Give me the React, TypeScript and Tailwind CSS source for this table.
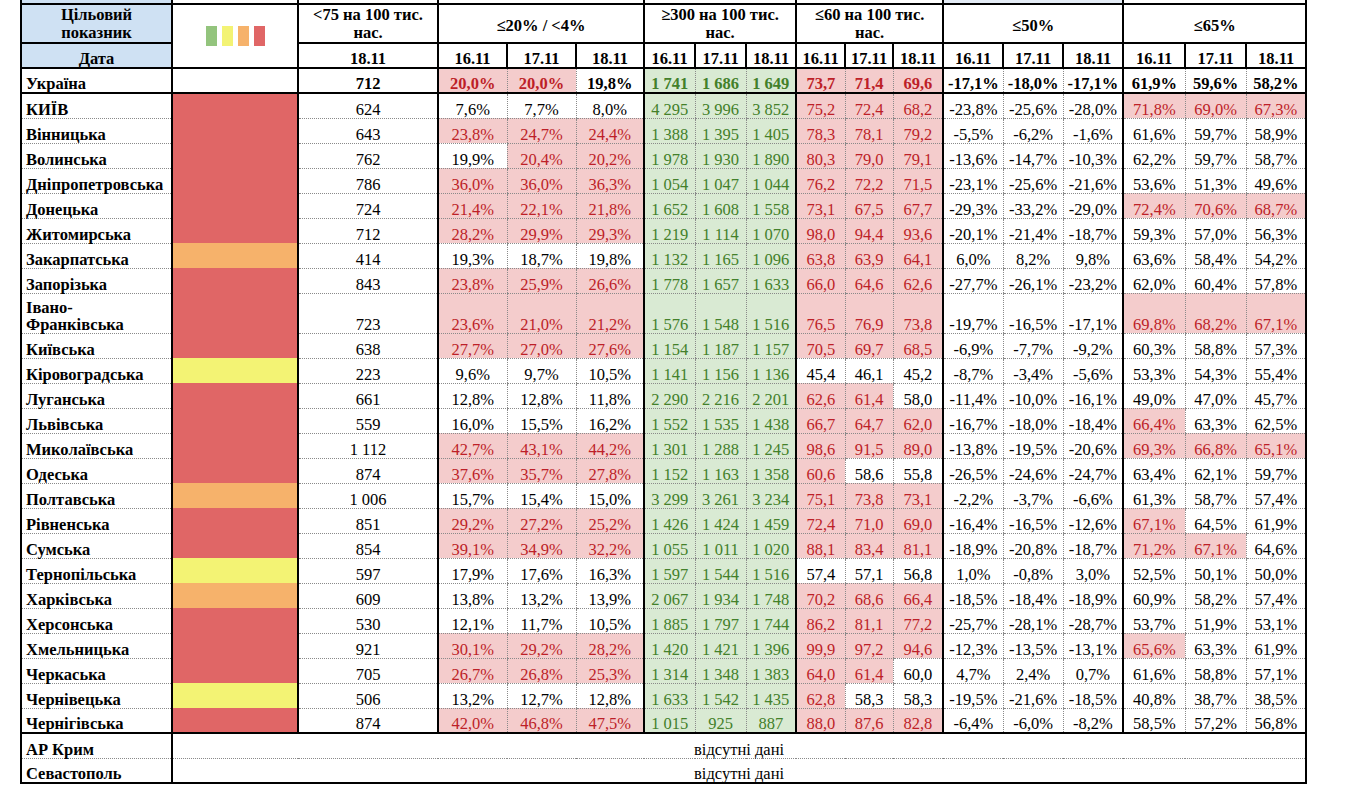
import React from "react";

const BL_THICK = "[border-left:2px_solid_#000]";
const BL_DOT = "[border-left:1px_dotted_#8a8a8a]";
const BR_THICK = "[border-right:2px_solid_#000]";
const BB_THICK = "[border-bottom:2px_solid_#000]";
const BB_DOT = "[border-bottom:1px_dotted_#8a8a8a]";
const BT_THICK = "[border-top:2px_solid_#000]";

const BLUE = "bg-[#cfe1f3]";
const PINK = "bg-[#f4cccc] text-[#bd1f28]";
const GREEN = "bg-[#d9ead3] text-[#43802a]";

type Row = { n: React.ReactNode; c: "r" | "y" | "o"; a: string; v: string; tall?: boolean };

const rows: Row[] = [
  { n: "КИЇВ", c: "r", a: "624", v: "7,6%|7,7%|8,0%|4 295|3 996|3 852|75,2*|72,4*|68,2*|-23,8%|-25,6%|-28,0%|71,8%*|69,0%*|67,3%*" },
  { n: "Вінницька", c: "r", a: "643", v: "23,8%*|24,7%*|24,4%*|1 388|1 395|1 405|78,3*|78,1*|79,2*|-5,5%|-6,2%|-1,6%|61,6%|59,7%|58,9%" },
  { n: "Волинська", c: "r", a: "762", v: "19,9%|20,4%*|20,2%*|1 978|1 930|1 890|80,3*|79,0*|79,1*|-13,6%|-14,7%|-10,3%|62,2%|59,7%|58,7%" },
  { n: "Дніпропетровська", c: "r", a: "786", v: "36,0%*|36,0%*|36,3%*|1 054|1 047|1 044|76,2*|72,2*|71,5*|-23,1%|-25,6%|-21,6%|53,6%|51,3%|49,6%" },
  { n: "Донецька", c: "r", a: "724", v: "21,4%*|22,1%*|21,8%*|1 652|1 608|1 558|73,1*|67,5*|67,7*|-29,3%|-33,2%|-29,0%|72,4%*|70,6%*|68,7%*" },
  { n: "Житомирська", c: "r", a: "712", v: "28,2%*|29,9%*|29,3%*|1 219|1 114|1 070|98,0*|94,4*|93,6*|-20,1%|-21,4%|-18,7%|59,3%|57,0%|56,3%" },
  { n: "Закарпатська", c: "o", a: "414", v: "19,3%|18,7%|19,8%|1 132|1 165|1 096|63,8*|63,9*|64,1*|6,0%|8,2%|9,8%|63,6%|58,4%|54,2%" },
  { n: "Запорізька", c: "r", a: "843", v: "23,8%*|25,9%*|26,6%*|1 778|1 657|1 633|66,0*|64,6*|62,6*|-27,7%|-26,1%|-23,2%|62,0%|60,4%|57,8%" },
  { n: (<>Івано-<br />Франківська</>), c: "r", a: "723", tall: true, v: "23,6%*|21,0%*|21,2%*|1 576|1 548|1 516|76,5*|76,9*|73,8*|-19,7%|-16,5%|-17,1%|69,8%*|68,2%*|67,1%*" },
  { n: "Київська", c: "r", a: "638", v: "27,7%*|27,0%*|27,6%*|1 154|1 187|1 157|70,5*|69,7*|68,5*|-6,9%|-7,7%|-9,2%|60,3%|58,8%|57,3%" },
  { n: "Кіровоградська", c: "y", a: "223", v: "9,6%|9,7%|10,5%|1 141|1 156|1 136|45,4|46,1|45,2|-8,7%|-3,4%|-5,6%|53,3%|54,3%|55,4%" },
  { n: "Луганська", c: "r", a: "661", v: "12,8%|12,8%|11,8%|2 290|2 216|2 201|62,6*|61,4*|58,0|-11,4%|-10,0%|-16,1%|49,0%|47,0%|45,7%" },
  { n: "Львівська", c: "r", a: "559", v: "16,0%|15,5%|16,2%|1 552|1 535|1 438|66,7*|64,7*|62,0*|-16,7%|-18,0%|-18,4%|66,4%*|63,3%|62,5%" },
  { n: "Миколаївська", c: "r", a: "1 112", v: "42,7%*|43,1%*|44,2%*|1 301|1 288|1 245|98,6*|91,5*|89,0*|-13,8%|-19,5%|-20,6%|69,3%*|66,8%*|65,1%*" },
  { n: "Одеська", c: "r", a: "874", v: "37,6%*|35,7%*|27,8%*|1 152|1 163|1 358|60,6*|58,6|55,8|-26,5%|-24,6%|-24,7%|63,4%|62,1%|59,7%" },
  { n: "Полтавська", c: "o", a: "1 006", v: "15,7%|15,4%|15,0%|3 299|3 261|3 234|75,1*|73,8*|73,1*|-2,2%|-3,7%|-6,6%|61,3%|58,7%|57,4%" },
  { n: "Рівненська", c: "r", a: "851", v: "29,2%*|27,2%*|25,2%*|1 426|1 424|1 459|72,4*|71,0*|69,0*|-16,4%|-16,5%|-12,6%|67,1%*|64,5%|61,9%" },
  { n: "Сумська", c: "r", a: "854", v: "39,1%*|34,9%*|32,2%*|1 055|1 011|1 020|88,1*|83,4*|81,1*|-18,9%|-20,8%|-18,7%|71,2%*|67,1%*|64,6%" },
  { n: "Тернопільська", c: "y", a: "597", v: "17,9%|17,6%|16,3%|1 597|1 544|1 516|57,4|57,1|56,8|1,0%|-0,8%|3,0%|52,5%|50,1%|50,0%" },
  { n: "Харківська", c: "o", a: "609", v: "13,8%|13,2%|13,9%|2 067|1 934|1 748|70,2*|68,6*|66,4*|-18,5%|-18,4%|-18,9%|60,9%|58,2%|57,4%" },
  { n: "Херсонська", c: "r", a: "530", v: "12,1%|11,7%|10,5%|1 885|1 797|1 744|86,2*|81,1*|77,2*|-25,7%|-28,1%|-28,7%|53,7%|51,9%|53,1%" },
  { n: "Хмельницька", c: "r", a: "921", v: "30,1%*|29,2%*|28,2%*|1 420|1 421|1 396|99,9*|97,2*|94,6*|-12,3%|-13,5%|-13,1%|65,6%*|63,3%|61,9%" },
  { n: "Черкаська", c: "r", a: "705", v: "26,7%*|26,8%*|25,3%*|1 314|1 348|1 383|64,0*|61,4*|60,0|4,7%|2,4%|0,7%|61,6%|58,8%|57,1%" },
  { n: "Чернівецька", c: "y", a: "506", v: "13,2%|12,7%|12,8%|1 633|1 542|1 435|62,8*|58,3|58,3|-19,5%|-21,6%|-18,5%|40,8%|38,7%|38,5%" },
  { n: "Чернігівська", c: "r", a: "874", v: "42,0%*|46,8%*|47,5%*|1 015|925|887|88,0*|87,6*|82,8*|-6,4%|-6,0%|-8,2%|58,5%|57,2%|56,8%" },
];

const ukraine = "20,0%*|20,0%*|19,8%|1 741|1 686|1 649|73,7*|71,4*|69,6*|-17,1%|-18,0%|-17,1%|61,9%|59,6%|58,2%";

const widths = [151, 126, 140, 69, 69, 68, 51, 51, 50, 49, 48, 50, 60, 60, 60, 62, 61, 60];

function colorBg(c: "r" | "y" | "o") {
  if (c === "r") return "bg-[#e06666]";
  if (c === "y") return "bg-[#f3f374]";
  return "bg-[#f6b26b]";
}

function ValueCells({ v, bold, lastRow }: { v: string; bold?: boolean; lastRow?: boolean }) {
  const vals = v.split("|");
  return (
    <>
      {vals.map((raw, i) => {
        const pink = raw.endsWith("*");
        const text = pink ? raw.slice(0, -1) : raw;
        const green = i >= 3 && i <= 5;
        const left = i % 3 === 0 ? BL_THICK : BL_DOT;
        const right = i === 14 ? BR_THICK : "";
        const bottom = lastRow ? BB_THICK : BB_DOT;
        const bg = green ? GREEN : pink ? PINK : "text-black";
        const weight = bold ? "font-bold" : "font-normal";
        return (
          <td key={i} className={`${left} ${right} ${bottom} ${bg} ${weight} p-0 leading-[17px] text-center align-bottom whitespace-nowrap`}>
            {text}
          </td>
        );
      })}
    </>
  );
}

export default function App() {
  return (
    <div className="w-[1352px] h-[798px] bg-white overflow-hidden [font-family:Liberation_Serif,Times_New_Roman,serif] text-[16.5px] leading-[18px] text-black">
      <table className="ml-[20px] w-[1287px] table-fixed border-collapse [font-family:Liberation_Serif,Times_New_Roman,serif] text-[16.5px] leading-[18px] text-black">
        <colgroup>
          {widths.map((w, i) => (
            <col key={i} style={{ width: w }} />
          ))}
        </colgroup>
        <tbody>
          {/* cut-off row above */}
          <tr className="h-[4px]">
            <td className={`${BL_THICK} ${BLUE} p-0`}></td>
            <td className={`${BL_THICK} p-0`}></td>
            <td className={`${BL_THICK} p-0`}></td>
            <td colSpan={3} className={`${BL_THICK} p-0`}></td>
            <td colSpan={3} className={`${BL_THICK} p-0`}></td>
            <td colSpan={3} className={`${BL_THICK} p-0`}></td>
            <td colSpan={3} className={`${BL_THICK} bg-[#e3ebf5] p-0`}></td>
            <td colSpan={3} className={`${BL_THICK} ${BR_THICK} p-0`}></td>
          </tr>
          {/* header row 1 */}
          <tr className="h-[39px]">
            <td className={`${BL_THICK} ${BT_THICK} ${BB_THICK} ${BLUE} p-0 pt-[1px] text-center align-middle font-bold`}>
              Цільовий
              <br />
              показник
            </td>
            <td rowSpan={2} className={`${BL_THICK} ${BT_THICK} ${BB_THICK} p-0 align-middle`}>
              <div className="flex justify-center gap-[5px]">
                <span className="block w-[11px] h-[20px] bg-[#93c47d]"></span>
                <span className="block w-[11px] h-[20px] bg-[#f3f374]"></span>
                <span className="block w-[11px] h-[20px] bg-[#f6b26b]"></span>
                <span className="block w-[11px] h-[20px] bg-[#e06666]"></span>
              </div>
            </td>
            <td className={`${BL_THICK} ${BT_THICK} ${BB_THICK} p-0 pt-[1px] text-center align-middle font-bold`}>
              &lt;75 на 100 тис.
              <br />
              нас.
            </td>
            <td colSpan={3} className={`${BL_THICK} ${BT_THICK} ${BB_THICK} p-0 pt-[4px] text-center align-middle font-bold`}>
              ≤20% / &lt;4%
            </td>
            <td colSpan={3} className={`${BL_THICK} ${BT_THICK} ${BB_THICK} p-0 pt-[1px] text-center align-middle font-bold`}>
              ≥300 на 100 тис.
              <br />
              нас.
            </td>
            <td colSpan={3} className={`${BL_THICK} ${BT_THICK} ${BB_THICK} p-0 pt-[1px] text-center align-middle font-bold`}>
              ≤60 на 100 тис.
              <br />
              нас.
            </td>
            <td colSpan={3} className={`${BL_THICK} ${BT_THICK} ${BB_THICK} p-0 pt-[4px] text-center align-middle font-bold`}>
              ≤50%
            </td>
            <td colSpan={3} className={`${BL_THICK} ${BR_THICK} ${BT_THICK} ${BB_THICK} p-0 pt-[4px] text-center align-middle font-bold`}>
              ≤65%
            </td>
          </tr>
          {/* date row */}
          <tr className="h-[25px]">
            <td className={`${BL_THICK} ${BB_THICK} ${BLUE} p-0 leading-[16px] text-center align-bottom font-bold`}>Дата</td>
            <td className={`${BL_THICK} ${BB_THICK} p-0 leading-[16px] text-center align-bottom font-bold`}>18.11</td>
            {Array.from({ length: 15 }).map((_, i) => (
              <td
                key={i}
                className={`${BL_THICK} ${i === 14 ? BR_THICK : ""} ${BB_THICK} p-0 leading-[16px] text-center align-bottom font-bold whitespace-nowrap`}
              >
                {["16.11", "17.11", "18.11"][i % 3]}
              </td>
            ))}
          </tr>
          {/* Ukraine */}
          <tr className="h-[25px]">
            <td className={`${BL_THICK} ${BB_THICK} p-0 pl-[4px] leading-[17px] text-left align-bottom font-bold whitespace-nowrap`}>Україна</td>
            <td className={`${BL_THICK} ${BB_THICK} p-0`}></td>
            <td className={`${BL_THICK} ${BB_THICK} p-0 leading-[17px] text-center align-bottom font-bold`}>712</td>
            <ValueCells v={ukraine} bold lastRow />
          </tr>
          {rows.map((r, idx) => {
            const last = idx === rows.length - 1;
            return (
              <tr key={idx} className={r.tall ? "h-[40px]" : "h-[25px]"}>
                <td className={`${BL_THICK} ${last ? BB_THICK : BB_DOT} p-0 pl-[4px] leading-[17px] text-left align-bottom font-bold whitespace-nowrap`}>
                  {r.n}
                </td>
                <td className={`${BL_THICK} ${last ? BB_THICK : ""} ${colorBg(r.c)} p-0`}></td>
                <td className={`${BL_THICK} ${last ? BB_THICK : BB_DOT} p-0 leading-[17px] text-center align-bottom whitespace-nowrap`}>{r.a}</td>
                <ValueCells v={r.v} lastRow={last} />
              </tr>
            );
          })}
          <tr className="h-[25px]">
            <td className={`${BL_THICK} ${BB_DOT} p-0 pl-[4px] leading-[17px] text-left align-bottom font-bold whitespace-nowrap`}>АР Крим</td>
            <td colSpan={17} className={`${BL_THICK} ${BR_THICK} ${BB_DOT} p-0 leading-[17px] text-center align-bottom`}>
              відсутні дані
            </td>
          </tr>
          <tr className="h-[25px]">
            <td className={`${BL_THICK} ${BB_THICK} p-0 pl-[4px] leading-[17px] text-left align-bottom font-bold whitespace-nowrap`}>Севастополь</td>
            <td colSpan={17} className={`${BL_THICK} ${BR_THICK} ${BB_THICK} p-0 leading-[17px] text-center align-bottom`}>
              відсутні дані
            </td>
          </tr>
        </tbody>
      </table>
    </div>
  );
}
